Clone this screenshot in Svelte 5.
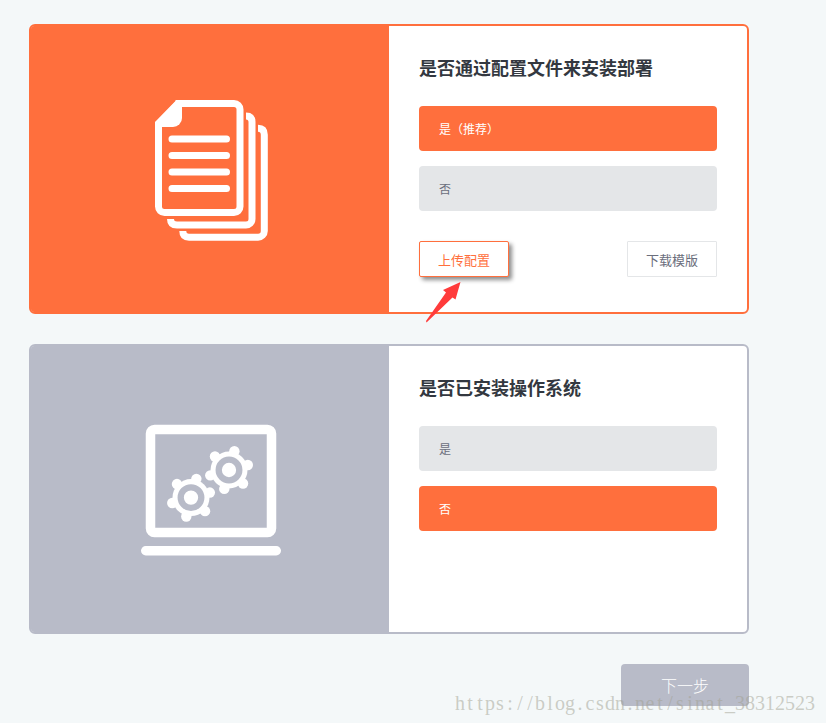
<script lang="ts">
    let useConfig = $state(true);
    let hasSystem = $state(false);

    const teeth = [-74, -15, 44, 104, 164, 224].map((deg) => {
        const rad = (deg * Math.PI) / 180;
        return { x: Math.cos(rad) * 19.5, y: Math.sin(rad) * 19.5 };
    });

    const gears = [
        { x: 60, y: 82.6 },
        { x: 98, y: 55 },
    ];

    const watermark = 'https://blog.csdn.net/sinat_38312523'.split('');
</script>

<main class="page">
    <section class="card active">
        <div class="cover">
            <svg width="140" height="160" viewBox="0 0 140 160">
                <g fill="none" stroke="#fff" stroke-width="7">
                    <path d="M34.5 13.5H93a6 6 0 0 1 6 6V116.500a6 6 0 0 1-6 6H23.500a6 6 0 0 1-6-6V33.500L37 13.500" />
                    <path d="M105 26q6 0 6 6V129a6 6 0 0 1-6 6H36q-6.500 0-6.500-6" />
                    <path d="M117 38.300q6.300 0 6.300 6.500V141a6.200 6.200 0 0 1-6.200 6.200H48q-6.200 0-6.200-6.200" />
                </g>
                <path class="fold" d="M36 10h5v18a9 9 0 0 1-9 9H14v-4z" />
                <path
                    d="M31 49h54.500M31 65.500h54.500M31 82h54.500M31 98.500h54.500"
                    stroke="#fff"
                    stroke-width="7"
                    stroke-linecap="round"
                />
            </svg>
        </div>
        <div class="content">
            <h2>是否通过配置文件来安装部署</h2>
            <button class="option" class:selected={useConfig} onclick={() => (useConfig = true)}>是（推荐）</button>
            <button class="option" class:selected={!useConfig} onclick={() => (useConfig = false)}>否</button>
            <div class="actions">
                <button class="small upload">上传配置</button>
                <button class="small">下载模版</button>
            </div>
        </div>
        <svg class="pointer" width="40" height="45" viewBox="0 0 40 45">
            <path d="M39.500 2L22 10l3 2.500L5 41l.5 1.500L31.500 17.500l3 2z" fill="#ff3b3b" />
        </svg>
    </section>

    <section class="card">
        <div class="cover">
            <svg width="160" height="150" viewBox="0 0 160 150">
                <rect x="19.5" y="14.500" width="121" height="103" rx="4" fill="none" stroke="#fff" stroke-width="9.500" />
                <rect x="10" y="131" width="140" height="9.500" rx="4.750" fill="#fff" />
                {#each gears as gear}
                    <g transform="translate({gear.x} {gear.y})" fill="#fff">
                        <circle r="18.500" />
                        {#each teeth as tooth}
                            <circle cx={tooth.x} cy={tooth.y} r="5.200" />
                        {/each}
                        <circle r="10.300" fill="none" stroke="#b8bbc8" stroke-width="6.300" />
                    </g>
                {/each}
            </svg>
        </div>
        <div class="content">
            <h2>是否已安装操作系统</h2>
            <button class="option" class:selected={hasSystem} onclick={() => (hasSystem = true)}>是</button>
            <button class="option" class:selected={!hasSystem} onclick={() => (hasSystem = false)}>否</button>
        </div>
    </section>

    <button class="next">下一步</button>
    <div class="watermark">
        {#each watermark as char}<span>{char}</span>{/each}
    </div>
</main>

<style>
    :global(body) {
        margin: 0;
        background: #f4f8f9;
    }
    .page {
        position: relative;
        box-sizing: border-box;
        display: flex;
        flex-direction: column;
        gap: 30px;
        width: 826px;
        height: 723px;
        padding: 24px 77px 0 29px;
        overflow: hidden;
        font-family: 'Noto Sans CJK SC', sans-serif;
    }
    button {
        font-family: inherit;
        padding: 0;
        border: 0;
        cursor: pointer;
    }
    .card {
        --accent: #b8bbc8;
        position: relative;
        box-sizing: border-box;
        display: flex;
        flex-shrink: 0;
        height: 290px;
        background: #fff;
        border: 2px solid var(--accent);
        border-radius: 6px;
    }
    .card.active {
        --accent: #ff6f3d;
    }
    .cover {
        display: flex;
        align-items: center;
        justify-content: center;
        width: 358px;
        padding-left: 0;
        background: var(--accent);
        border-radius: 3px 0 0 3px;
    }
    .cover svg {
        display: block;
        margin: 2px 0 0 2px;
    }
    .fold {
        fill: #fff;
    }
    .content {
        flex: 1;
        padding: 26px 30px 0;
    }
    h2 {
        margin: 0 0 24px;
        color: #333840;
        font-size: 18px;
        font-weight: 700;
        line-height: 30px;
    }
    .option {
        display: block;
        width: 100%;
        height: 45px;
        margin-bottom: 15px;
        padding: 0 20px 0 20px;
        color: #6b6e7c;
        font-size: 12px;
        text-align: left;
        background: #e4e6e8;
        border-radius: 4px;
    }
    .option.selected {
        color: #fff;
        background: #ff6f3d;
    }
    .actions {
        display: flex;
        justify-content: space-between;
        margin-top: 30px;
    }
    .small {
        width: 90px;
        height: 36px;
        color: #6b6e7c;
        font-size: 13px;
        background: #fff;
        border: 1px solid #e4e6e8;
        border-radius: 1px;
    }
    .upload {
        color: #ff6f3d;
        border-color: #ff6f3d;
        border-radius: 2px;
        box-shadow: 3px 3px 4px rgba(0, 0, 0, 0.45);
    }
    .pointer {
        position: absolute;
        left: 390px;
        top: 254px;
    }
    .next {
        align-self: flex-end;
        flex-shrink: 0;
        width: 128px;
        height: 42px;
        margin-right: 0;
        color: #fff;
        font-size: 16px;
        font-weight: 300;
        background: #b8bbc8;
        border-radius: 4px;
    }
    .watermark {
        position: absolute;
        left: 455px;
        top: 691px;
        display: flex;
        color: rgba(160, 160, 145, 0.5);
        font-family: 'Liberation Serif', serif;
        font-size: 20px;
        line-height: 24px;
        pointer-events: none;
    }
    .watermark span {
        width: 10px;
        text-align: center;
    }
</style>
